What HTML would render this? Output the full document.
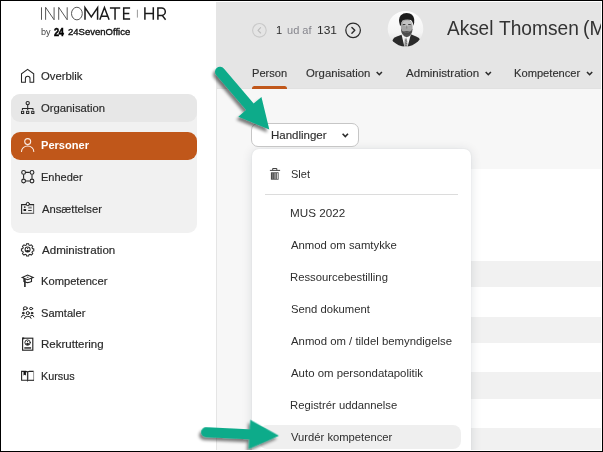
<!DOCTYPE html>
<html>
<head>
<meta charset="utf-8">
<style>
*{margin:0;padding:0;box-sizing:border-box}
html,body{width:603px;height:452px;overflow:hidden;background:#fff}
body{font-family:"Liberation Sans",sans-serif;position:relative;color:#333}
.abs{position:absolute}
.t{position:absolute;white-space:nowrap;line-height:1;transform-origin:0 0}
#frame{position:absolute;left:0;top:0;width:603px;height:452px;border:1px solid #000;z-index:50}
#frame2{position:absolute;left:1px;top:1px;width:601px;height:450px;border:1px solid #fff;z-index:49}
#side{left:0;top:0;width:216px;height:452px;background:#fff}
#sideshadow{left:216px;top:0;width:1px;height:452px;background:#e5e5e5}
#grp{left:11px;top:94px;width:186px;height:139px;background:#f1f1f1;border-radius:9px}
#grph{left:11px;top:94px;width:186px;height:27.5px;background:#e7e7e7;border-radius:9px}
#act{left:11px;top:132px;width:186px;height:27.7px;background:#c0571a;border-radius:9px}
#hdr{left:216px;top:0;width:387px;height:88.8px;background:#e5e5e5;box-shadow:inset 0 -1px 0 #e1e1e1}
#main{left:216px;top:88px;width:387px;height:364px;background:#f7f7f7}
#white{left:252px;top:169px;width:351px;height:283px;background:#fff}
.stripe{left:252px;width:351px;background:#f1f1f1}
#btn{left:251.4px;top:123.4px;width:107.4px;height:24px;background:#fff;border:1px solid #c6c6c6;border-radius:7px}
#dd{left:252px;top:148.8px;width:219px;height:320px;background:#fff;border-radius:7px;box-shadow:0 1px 11px rgba(20,30,50,0.12),0 0 2px rgba(20,30,50,0.07)}
#hl{left:259px;top:425px;width:202px;height:24.3px;background:#efefef;border-radius:8px}
#div{left:265px;top:193.7px;width:193px;height:1px;background:#dcdcdc}
</style>
</head>
<body>
<div class="abs" id="main"></div>
<div class="abs" id="white"></div>
<div class="abs stripe" style="top:261px;height:26px"></div>
<div class="abs stripe" style="top:317px;height:26px"></div>
<div class="abs stripe" style="top:372px;height:26.8px"></div>
<div class="abs stripe" style="top:428px;height:22px"></div>
<div class="abs" id="hdr"></div>
<div class="abs" id="side"></div>
<div class="abs" id="sideshadow"></div>
<div class="abs" id="grp"></div>
<div class="abs" id="grph"></div>
<div class="abs" id="act"></div>
<div class="t" id="by1" style="left:40.6px;top:27.0px;font-size:9.5px;color:#444;transform:scaleX(0.96);">by</div>
<div class="t" id="by2" style="left:53.97px;top:27.0px;font-size:10.5px;color:#000;font-weight:bold;transform:scaleX(0.88);-webkit-text-stroke:0.5px #000;letter-spacing:-0.3px;">24</div>
<div class="t" id="by3" style="left:67.59px;top:28.0px;font-size:9.3px;color:#111;transform:scaleX(1.0238);-webkit-text-stroke:0.35px #111;">24SevenOffice</div>
<div class="t" id="n1" style="left:41.11px;top:70.0px;font-size:11.6px;color:#2a2a2a;transform:scaleX(0.9738);-webkit-text-stroke:0.18px #2a2a2a;">Overblik</div>
<div class="t" id="n2" style="left:41.31px;top:102.0px;font-size:11.6px;color:#2a2a2a;transform:scaleX(0.9736);-webkit-text-stroke:0.18px #2a2a2a;">Organisation</div>
<div class="t" id="n3" style="left:41.08px;top:139.0px;font-size:11.6px;color:#fff;font-weight:bold;transform:scaleX(0.9539);">Personer</div>
<div class="t" id="n4" style="left:40.65px;top:171.0px;font-size:11.6px;color:#2a2a2a;transform:scaleX(0.9501);-webkit-text-stroke:0.18px #2a2a2a;">Enheder</div>
<div class="t" id="n5" style="left:41.6px;top:203.0px;font-size:11.6px;color:#2a2a2a;transform:scaleX(0.9688);-webkit-text-stroke:0.18px #2a2a2a;">Ansættelser</div>
<div class="t" id="n6" style="left:41.8px;top:244.0px;font-size:11.6px;color:#2a2a2a;transform:scaleX(0.9979);-webkit-text-stroke:0.18px #2a2a2a;">Administration</div>
<div class="t" id="n7" style="left:41.24px;top:275.0px;font-size:11.6px;color:#2a2a2a;transform:scaleX(0.9624);-webkit-text-stroke:0.18px #2a2a2a;">Kompetencer</div>
<div class="t" id="n8" style="left:41.32px;top:307.0px;font-size:11.6px;color:#2a2a2a;transform:scaleX(0.9574);-webkit-text-stroke:0.18px #2a2a2a;">Samtaler</div>
<div class="t" id="n9" style="left:40.81px;top:338.0px;font-size:11.6px;color:#2a2a2a;transform:scaleX(0.9923);-webkit-text-stroke:0.18px #2a2a2a;">Rekruttering</div>
<div class="t" id="n10" style="left:41.27px;top:370.0px;font-size:11.6px;color:#2a2a2a;transform:scaleX(0.9329);-webkit-text-stroke:0.18px #2a2a2a;">Kursus</div>
<div class="t" id="c1" style="left:275.86px;top:24.0px;font-size:11.6px;color:#2b2b2b;transform:scaleX(0.96);">1</div>
<div class="t" id="c2" style="left:286.79px;top:24.0px;font-size:11.6px;color:#85858c;transform:scaleX(0.952);">ud af</div>
<div class="t" id="c3" style="left:316.79px;top:24.0px;font-size:11.6px;color:#2b2b2b;transform:scaleX(1.035);">131</div>
<div class="t" id="nm1" style="left:447.48px;top:18.0px;font-size:20.3px;color:#333;transform:scaleX(0.9351);">Aksel</div>
<div class="t" id="nm2" style="left:499.33px;top:18.0px;font-size:20.3px;color:#333;transform:scaleX(0.945);">Thomsen</div>
<div class="t" id="nm3" style="left:583.3px;top:18.0px;font-size:20.3px;color:#333;transform:scaleX(0.957);">(M</div>
<div class="t" id="t1" style="left:252.34px;top:67.0px;font-size:11.6px;color:#303030;transform:scaleX(0.9571);-webkit-text-stroke:0.15px #303030;">Person</div>
<div class="abs" id="tabline" style="left:251.8px;top:85.9px;width:35.2px;height:3px;background:#c0571a;border-radius:2.5px 2.5px 0 0"></div>
<div class="t" id="t2" style="left:306.31px;top:67.0px;font-size:11.6px;color:#303030;transform:scaleX(0.9783);-webkit-text-stroke:0.15px #303030;">Organisation</div>
<div class="t" id="t3" style="left:406.0px;top:67.0px;font-size:11.6px;color:#303030;transform:scaleX(0.9966);-webkit-text-stroke:0.15px #303030;">Administration</div>
<div class="t" id="t4" style="left:514.04px;top:67.0px;font-size:11.6px;color:#303030;transform:scaleX(0.9609);-webkit-text-stroke:0.15px #303030;">Kompetencer</div>
<div class="abs" id="dd"></div>
<div class="abs" id="btn"></div>
<div class="t" id="btnt" style="left:270.91px;top:129.0px;font-size:11.6px;color:#2e2e2e;transform:scaleX(0.9913);-webkit-text-stroke:0.15px #303030;">Handlinger</div>
<div class="abs" id="div"></div>
<div class="abs" id="hl"></div>
<div class="t" id="m0" style="left:290.53000000000003px;top:168.0px;font-size:11.6px;color:#2e2e2e;transform:scaleX(0.9497);">Slet</div>
<div class="t" id="m1" style="left:289.99px;top:207.0px;font-size:11.6px;color:#2e2e2e;transform:scaleX(1.0071);">MUS 2022</div>
<div class="t" id="m2" style="left:291.0px;top:239.0px;font-size:11.6px;color:#2e2e2e;transform:scaleX(0.9773);">Anmod om samtykke</div>
<div class="t" id="m3" style="left:290.03px;top:271.0px;font-size:11.6px;color:#2e2e2e;transform:scaleX(0.9742);">Ressourcebestilling</div>
<div class="t" id="m4" style="left:290.51px;top:303.0px;font-size:11.6px;color:#2e2e2e;transform:scaleX(0.9712);">Send dokument</div>
<div class="t" id="m5" style="left:291.0px;top:335.0px;font-size:11.6px;color:#2e2e2e;transform:scaleX(0.9795);">Anmod om / tildel bemyndigelse</div>
<div class="t" id="m6" style="left:291.0px;top:367.0px;font-size:11.6px;color:#2e2e2e;transform:scaleX(0.9843);">Auto om persondatapolitik</div>
<div class="t" id="m7" style="left:290.03px;top:399.0px;font-size:11.6px;color:#2e2e2e;transform:scaleX(0.9731);">Registrér uddannelse</div>
<div class="t" id="m8" style="left:290.88px;top:431.0px;font-size:11.6px;color:#2e2e2e;transform:scaleX(0.9679);">Vurdér kompetencer</div>
<svg class="abs" id="ov" style="left:0;top:0;z-index:40" width="603" height="452" viewBox="0 0 603 452">
<defs>
<filter id="sh" x="-30%" y="-30%" width="160%" height="160%">
<feGaussianBlur in="SourceAlpha" stdDeviation="1.8"/>
<feOffset dx="-2" dy="2.5" result="o"/>
<feComponentTransfer><feFuncA type="linear" slope="0.5"/></feComponentTransfer>
<feMerge><feMergeNode/><feMergeNode in="SourceGraphic"/></feMerge>
</filter>
<filter id="bl" x="-10%" y="-10%" width="120%" height="120%"><feGaussianBlur stdDeviation="0.7"/></filter>
<clipPath id="avc"><circle cx="405.5" cy="28.7" r="17.8"/></clipPath>
<linearGradient id="avbg" x1="0" y1="0" x2="0" y2="1"><stop offset="0" stop-color="#fdfdfd"/><stop offset="0.6" stop-color="#f4f4f4"/><stop offset="1" stop-color="#d8d8d8"/></linearGradient>
</defs>
<!-- logo -->
<g id="logo" fill="none" stroke-linecap="butt" stroke-linejoin="miter">
<g stroke="#585858" stroke-width="1">
<path d="M41.5,7.3 V19.8"/>
<path d="M45.6,19.8 V7.3 L54.1,19.8 V7.3"/>
<path d="M58.7,19.8 V7.3 L67.2,19.8 V7.3"/>
<ellipse cx="76.9" cy="13.55" rx="5.4" ry="6.3"/>
</g>
<g stroke="#1a1a1a" stroke-width="1.5">
<path d="M85,19.8 V7.6 L91.3,16.8 L97.6,7.6 V19.8"/>
<path d="M99.8,19.8 L104.45,7.6 L109.1,19.8 M101.5,16.2 H107.4"/>
<path d="M109.9,8 H120.2 M115.05,8 V19.8"/>
<path d="M130.1,8 H123.7 V19.1 H130.1 M123.7,13.5 H129.3"/>
<path d="M144.9,7.3 V19.8 M153.3,7.3 V19.8 M144.9,13.5 H153.3"/>
<path d="M157.9,19.8 V8 H161.6 A3.7,3.7 0 0 1 161.6,15.4 H157.9 M162.2,15.4 L165.6,19.8"/>
</g>
<path d="M137.4,9.7 V17.6" stroke="#9a9a9a" stroke-width="1"/>
</g>

<!-- sidebar icons -->
<g id="icons" fill="none" stroke="#262626" stroke-width="1.15" stroke-linejoin="round" stroke-linecap="round">
<!-- home -->
<path d="M21.5,82.3 V73.7 L27.6,69.4 L33.7,73.7 V82.3 H30 V78.6 A2.3,2.3 0 0 0 25.4,78.6 V82.3 Z" stroke-linejoin="miter" stroke-linecap="butt" stroke-width="1.05"/>
<!-- org -->
<g stroke-width="1.05">
<circle cx="27.7" cy="103.1" r="1.65"/>
<path d="M27.7,105 V108.5 M22.4,110.1 V108.5 H33 V110.1" stroke-linecap="butt"/>
<path d="M27.7,108.5 V110.1" stroke-linecap="butt"/>
<rect x="21.5" y="111.3" width="2.2" height="2.1"/>
<rect x="26.6" y="111.3" width="2.2" height="2.1"/>
<rect x="31.7" y="111.3" width="2.2" height="2.1"/>
</g>
<!-- person (white) -->
<g stroke="#fbeee6" stroke-width="1.05">
<circle cx="27.7" cy="141.6" r="3"/>
<path d="M21.5,151.4 A6.1,5.4 0 0 1 33.8,151.4"/>
</g>
<!-- units -->
<g stroke-width="1.1">
<circle cx="23.6" cy="172.4" r="1.9"/><circle cx="32" cy="172.4" r="1.9"/>
<circle cx="23.6" cy="181" r="1.9"/><circle cx="32" cy="181" r="1.9"/>
<path d="M25.8,172.4 H29.8 M23.6,174.6 V178.8 M25.8,181 H29.8 M32,174.6 V178.8" stroke-linecap="butt"/>
</g>
<!-- badge -->
<g stroke-width="1.1" stroke-linejoin="miter">
<path d="M21.6,213.4 H33.6 V204.6" stroke="#6e6e6e"/>
<path d="M33.6,204.6 H21.6 V213.4"/>
<circle cx="27.8" cy="204" r="1.65" fill="#f1f1f1" stroke-width="1"/>
<circle cx="24.75" cy="207.1" r="0.85" fill="#262626" stroke="none"/>
<rect x="23.5" y="209" width="2.6" height="1.9" fill="#1a1a1a" stroke="none" rx="0.5"/>
<rect x="28.2" y="206.6" width="3.5" height="2" fill="#8a8a8a" stroke="none"/>
<rect x="28.2" y="210.1" width="3.5" height="0.9" fill="#1a1a1a" stroke="none"/>
</g>
<!-- gear -->
<g stroke-width="1.1" transform="translate(27.6 249.6) scale(0.93) translate(-27.6 -249.6)">
<path id="gear" d="M26.5,243.3 h2.2 l0.4,1.5 l1.1,0.45 l1.35,-0.8 l1.55,1.55 l-0.8,1.35 l0.45,1.1 l1.5,0.4 v2.2 l-1.5,0.4 l-0.45,1.1 l0.8,1.35 l-1.55,1.55 l-1.35,-0.8 l-1.1,0.45 l-0.4,1.5 h-2.2 l-0.4,-1.5 l-1.1,-0.45 l-1.35,0.8 l-1.55,-1.55 l0.8,-1.35 l-0.45,-1.1 l-1.5,-0.4 v-2.2 l1.5,-0.4 l0.45,-1.1 l-0.8,-1.35 l1.55,-1.55 l1.35,0.8 l1.1,-0.45 Z" stroke-linejoin="miter"/>
<circle cx="27.6" cy="249.6" r="2.7"/>
<path d="M25.6,251.2 A2.2,2 0 0 1 29.6,251.2 A2.7,2.7 0 0 1 25.6,251.2 Z" fill="#1a1a1a" stroke="none"/>
<circle cx="27.6" cy="248.5" r="0.7" fill="#1a1a1a" stroke="none"/>
</g>
<!-- grad cap -->
<g stroke-width="1.1" stroke-linejoin="miter">
<path d="M22.2,277.4 L27.6,275 L33.2,277.4 L27.6,279.7 Z"/>
<path d="M23.9,278.6 V281.6 Q27.6,283.6 31.5,281.6 V278.6"/>
<path d="M24.9,279 V286.9" stroke-width="1.6" stroke-linecap="butt"/>
<path d="M27.2,277.3 h1" stroke-width="0.9"/>
</g>
<!-- people -->
<g stroke-width="1">
<ellipse cx="25.3" cy="308.2" rx="2" ry="1.4"/>
<path d="M23.6,309.2 L23.2,310.4 L24.6,309.7" stroke-width="0.8"/>
<ellipse cx="31.1" cy="308.6" rx="1.6" ry="1.1"/>
<circle cx="27.8" cy="313.1" r="1.55"/>
<path d="M24.4,318.6 Q24.6,316.3 27.8,316.3 Q31,316.3 31.2,318.4"/>
<circle cx="23.2" cy="313.1" r="0.85" fill="#262626"/>
<circle cx="32" cy="313.1" r="0.85" fill="#262626"/>
<path d="M21.4,317.2 Q21.6,315.3 23.4,315.3 Q24.6,315.3 25.2,316"/>
<path d="M33.8,316.8 Q33.6,315.3 32,315.3 Q30.8,315.3 30.3,316"/>
</g>
<!-- recruit -->
<g stroke-width="1.15" stroke-linejoin="miter">
<rect x="22.6" y="338.2" width="10.2" height="12"/>
<path d="M22.3,338.4 H24.2" stroke-width="1.8" stroke-linecap="butt"/>
<circle cx="27.6" cy="342.6" r="2.7" stroke-width="1"/>
<path d="M25.8,344 A2,1.8 0 0 1 29.4,344 A2.5,2.5 0 0 1 25.8,344 Z" fill="#1a1a1a" stroke="none"/>
<circle cx="27.6" cy="341.7" r="0.6" fill="#1a1a1a" stroke="none"/>
<rect x="24.3" y="347.3" width="6.8" height="1.3" fill="#111" stroke="none"/>
</g>
<!-- book -->
<g stroke-width="1.1" stroke-linejoin="miter" stroke-linecap="butt">
<path d="M27.5,372.6 V380.3 H21.6 V371.4 H25.9 Q27.4,371.5 27.5,372.6 Q27.8,371.4 29.4,371.4 H33.7"/>
<path d="M33.6,371.4 V380.3" stroke="#8c8c8c" stroke-width="0.9"/>
<path d="M27.5,380.3 H34" />
<path d="M27.5,380.3 V381.4" />
<path d="M23.5,371.2 H25.9 V375.6 L24.7,374.7 L23.5,375.6 Z" fill="#111" stroke="none"/>
<path d="M28.3,372.6 V380" stroke="#9a9a9a" stroke-width="0.8"/>
</g>
</g>

<!-- header icons -->
<g fill="none" stroke-linecap="round" stroke-linejoin="round">
<circle cx="259.4" cy="30.3" r="6.8" stroke="#c9c9c9" stroke-width="1.1"/>
<path d="M260.6,27.6 L258,30.3 L260.6,33" stroke="#bdbdbd" stroke-width="1.1"/>
<circle cx="353.1" cy="30.3" r="7.3" stroke="#2c2c2c" stroke-width="1.25"/>
<path d="M351.9,27.4 L354.8,30.3 L351.9,33.2" stroke="#2c2c2c" stroke-width="1.4"/>
<g stroke="#2b2b2b" stroke-width="1.6" stroke-linecap="butt" stroke-linejoin="miter">
<path d="M376.7,72 L379.3,74.7 L381.9,72"/>
<path d="M485.7,72 L488.3,74.7 L490.9,72"/>
<path d="M587,72 L589.6,74.7 L592.2,72"/>
<path d="M342.6,133.7 L345.3,136.5 L348,133.7"/>
</g>
</g>

<!-- avatar -->
<g clip-path="url(#avc)">
<rect x="387" y="10" width="38" height="38" fill="url(#avbg)"/>
<g filter="url(#bl)">
<path d="M391,48 L392.6,40 Q393.6,37.6 396.8,36.6 L401.6,34.8 L405.8,41 L410.8,34.2 L416.2,36.6 Q419.6,37.8 420.4,40.4 L421.8,48 Z" fill="#2b2b2b"/>
<path d="M401.6,34.8 L404.4,46.8 L407.6,46.8 L410.9,34.2 L406.5,37.8 Z" fill="#f4f4f4"/>
<path d="M404.7,38.6 L407,38.6 L407.5,47 L404.2,47 Z" fill="#9a9a9a"/>
<path d="M405.2,40.5 l2,1 M405,42.8 l2.3,1.1 M404.8,45 l2.6,1.2" stroke="#555" stroke-width="0.6" fill="none"/>
<ellipse cx="406.7" cy="27" rx="5.9" ry="8" fill="#a4a4a4"/>
<ellipse cx="407" cy="23.4" rx="4.4" ry="2.9" fill="#c2c2c2"/>
<ellipse cx="409.6" cy="28.2" rx="1.8" ry="1.6" fill="#a8a8a8"/>
<path d="M400.9,28.2 Q401,36 406.7,37.3 Q412.4,36 412.6,28.2 Q411.6,31.2 409.6,31.6 Q406.7,30.4 403.8,31.6 Q401.8,31.2 400.9,28.2 Z" fill="#444" opacity="0.92"/>
<path d="M404.4,32.6 Q406.7,31.8 409,32.6" stroke="#6a6a6a" stroke-width="0.7" fill="none"/>
<path d="M400,25.6 Q397.8,18.6 400.8,15.2 Q404.4,12 409.8,13.4 Q415,15.2 414.2,22.4 L413.4,25.8 Q412.8,21.2 410.8,20 Q406.2,19 402.6,20.4 Q401.2,21.6 400.8,25.8 Z" fill="#1d1d1d"/>
<path d="M402.8,24.6 h2.6 M408.2,24.6 h2.6" stroke="#333" stroke-width="1"/>
<path d="M406.7,25.5 V28.6" stroke="#7a7a7a" stroke-width="0.7"/>
</g>
</g>

<!-- trash -->
<g>
<path d="M269.9,170.4 H280.1" stroke="#2e2e2e" stroke-width="0.9" fill="none"/>
<path d="M272.7,170.2 V168.5 H276.8 V170.2" stroke="#2e2e2e" stroke-width="0.9" fill="none"/>
<rect x="270.9" y="172.3" width="7.7" height="7.4" fill="#4a4a4a"/>
<rect x="274.6" y="173.1" width="0.9" height="5.8" fill="#d8d8d8"/>
<rect x="276.8" y="173.1" width="1" height="5.8" fill="#f0f0f0"/>
<rect x="272.5" y="173.1" width="0.7" height="5.8" fill="#a0a0a0"/>
</g>

<g id="arrows" filter="url(#sh)" fill="#0aab8a" stroke="none">
<g transform="translate(220 71.8) rotate(49.5)">
<path d="M0,-5 L46,-5 L46,-15.2 L75.9,0 L46,15.2 L46,5 L0,5 A5,5 0 0 1 0,-5 Z"/>
</g>
<g transform="translate(206.2 432.2) rotate(2.8)">
<path d="M0,-5.1 L43.4,-5.1 L43.4,-14.6 L72.9,0 L43.4,14.6 L43.4,5.1 L0,5.1 A5.1,5.1 0 0 1 0,-5.1 Z"/>
</g>
</g>
</svg>

<div id="frame2"></div>
<div id="frame"></div>
</body>
</html>
